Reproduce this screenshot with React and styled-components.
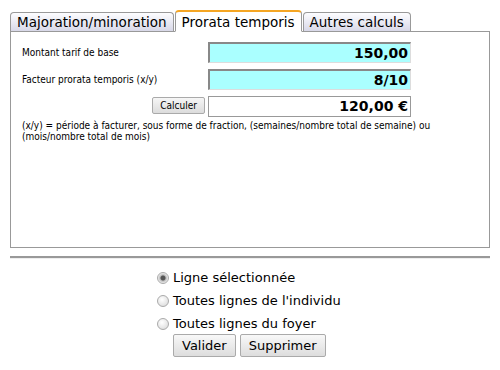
import React, { useState } from 'react'
import { styled, createGlobalStyle } from 'styled-components'

const GlobalStyle = createGlobalStyle`
  body {
    margin: 0;
    background: #fff;
    font-family: "DejaVu Sans", Verdana, sans-serif;
    color: #000;
  }
`;

const Page = styled.div`
  width: 500px;
  height: 370px;
  padding: 9px 10px 0 10px;
  box-sizing: border-box;
`;

const Tabs = styled.div`
  display: flex;
  align-items: flex-end;
  gap: 0;
  height: 22px;
`;

const Tab = styled.div`
  height: ${(p) => (p.active ? '22px' : '19px')};
  box-sizing: border-box;
  padding: 0 6px;
  margin-right: 1px;
  font-size: 13.5px;
  line-height: ${(p) => (p.active ? '20px' : '18px')};
  border: 1px solid #999;
  border-top: ${(p) => (p.active ? '2px solid #f5a623' : '1px solid #999')};
  border-bottom: ${(p) => (p.active ? '1px solid #fff' : 'none')};
  border-radius: 4px 4px 0 0;
  background: ${(p) => (p.active ? '#fff' : 'linear-gradient(#fdfdff, #d8d8e8)')};
  margin-bottom: ${(p) => (p.active ? '-1px' : '0')};
  position: relative;
  cursor: pointer;
  white-space: nowrap;
`;

const Panel = styled.div`
  height: 217px;
  box-sizing: border-box;
  border: 1px solid #999;
  padding: 10px 11px;
  font-family: "DejaVu Sans Condensed", "DejaVu Sans", sans-serif;
`;

const Row = styled.div`
  display: flex;
  align-items: center;
  height: 21px;
  margin-bottom: 6px;
`;

const Label = styled.div`
  flex: 1;
  font-size: 10px;
  padding-right: ${(p) => (p.right ? '3px' : '0')};
  display: flex;
  justify-content: ${(p) => (p.right ? 'flex-end' : 'flex-start')};
`;

const Field = styled.div`
  width: 203px;
  height: 21px;
  box-sizing: border-box;
  margin-right: 67px;
  background: ${(p) => (p.result ? '#fff' : '#aaffff')};
  border: 1px solid #999;
  border-top: ${(p) => (p.result ? '1px solid #999' : '2px solid #888')};
  border-left: ${(p) => (p.result ? '1px solid #999' : '2px solid #888')};
  border-bottom: ${(p) => (p.result ? '1px solid #999' : '1px solid #ddd')};
  border-right: ${(p) => (p.result ? '1px solid #999' : '1px solid #ddd')};
  font-family: "DejaVu Sans", Verdana, sans-serif;
  font-weight: bold;
  font-size: 14px;
  line-height: 18px;
  text-align: right;
  padding-right: 2px;
`;

const SmallButton = styled.button`
  font-family: "DejaVu Sans Condensed", "DejaVu Sans", sans-serif;
  font-size: 10px;
  height: 17px;
  padding: 0 7px;
  border: 1px solid #aaa;
  border-radius: 2px;
  background: linear-gradient(#f6f6f6, #dcdcdc);
  color: #000;
  margin-top: -3px;
`;

const Note = styled.p`
  margin: 0;
  font-size: 10px;
  line-height: 11px;
  margin-top: -3px;
`;

const Separator = styled.div`
  margin-top: 8px;
  border-top: 2px solid #999;
  border-bottom: 1px solid #eee;
`;

const Choices = styled.div`
  display: flex;
  flex-direction: column;
  align-items: flex-start;
  margin: 9px 0 0 147px;
  gap: 4px;
`;

const Choice = styled.label`
  display: flex;
  align-items: center;
  font-size: 13px;
  height: 19px;
`;

const Radio = styled.span`
  width: 12px;
  height: 12px;
  border-radius: 50%;
  box-sizing: border-box;
  border: 1px solid #aaa;
  background: ${(p) =>
    p.checked
      ? 'radial-gradient(circle, #555 0 2px, #bbb 3px, #eee 5px)'
      : 'radial-gradient(circle at 40% 35%, #fff, #d6d6d6)'};
  margin-right: 4px;
`;

const Actions = styled.div`
  display: flex;
  gap: 4px;
  margin: 1px 0 0 163px;
`;

const Button = styled.button`
  font-family: "DejaVu Sans", Verdana, sans-serif;
  font-size: 13px;
  height: 23px;
  padding: 0 8px;
  border: 1px solid #aaa;
  border-radius: 2px;
  background: linear-gradient(#f8f8f8, #dddddd);
  color: #000;
`;

const tabs = ['Majoration/minoration', 'Prorata temporis', 'Autres calculs'];
const choices = ['Ligne sélectionnée', "Toutes lignes de l'individu", 'Toutes lignes du foyer'];

export default function App() {
  const [active, setActive] = useState(1);
  const [choice, setChoice] = useState(0);
  return (
    <Page>
      <GlobalStyle />
      <Tabs>
        {tabs.map((t, i) => (
          <Tab key={t} active={i === active} onClick={() => setActive(i)}>{t}</Tab>
        ))}
      </Tabs>
      <Panel>
        <Row>
          <Label>Montant tarif de base</Label>
          <Field>150,00</Field>
        </Row>
        <Row>
          <Label>Facteur prorata temporis (x/y)</Label>
          <Field>8/10</Field>
        </Row>
        <Row>
          <Label right><SmallButton>Calculer</SmallButton></Label>
          <Field result>120,00 €</Field>
        </Row>
        <Note>
          (x/y) = période à facturer, sous forme de fraction, (semaines/nombre total de semaine) ou
          (mois/nombre total de mois)
        </Note>
      </Panel>
      <Separator />
      <Choices>
        {choices.map((c, i) => (
          <Choice key={c} onClick={() => setChoice(i)}>
            <Radio checked={i === choice} />
            {c}
          </Choice>
        ))}
      </Choices>
      <Actions>
        <Button>Valider</Button>
        <Button>Supprimer</Button>
      </Actions>
    </Page>
  )
}
